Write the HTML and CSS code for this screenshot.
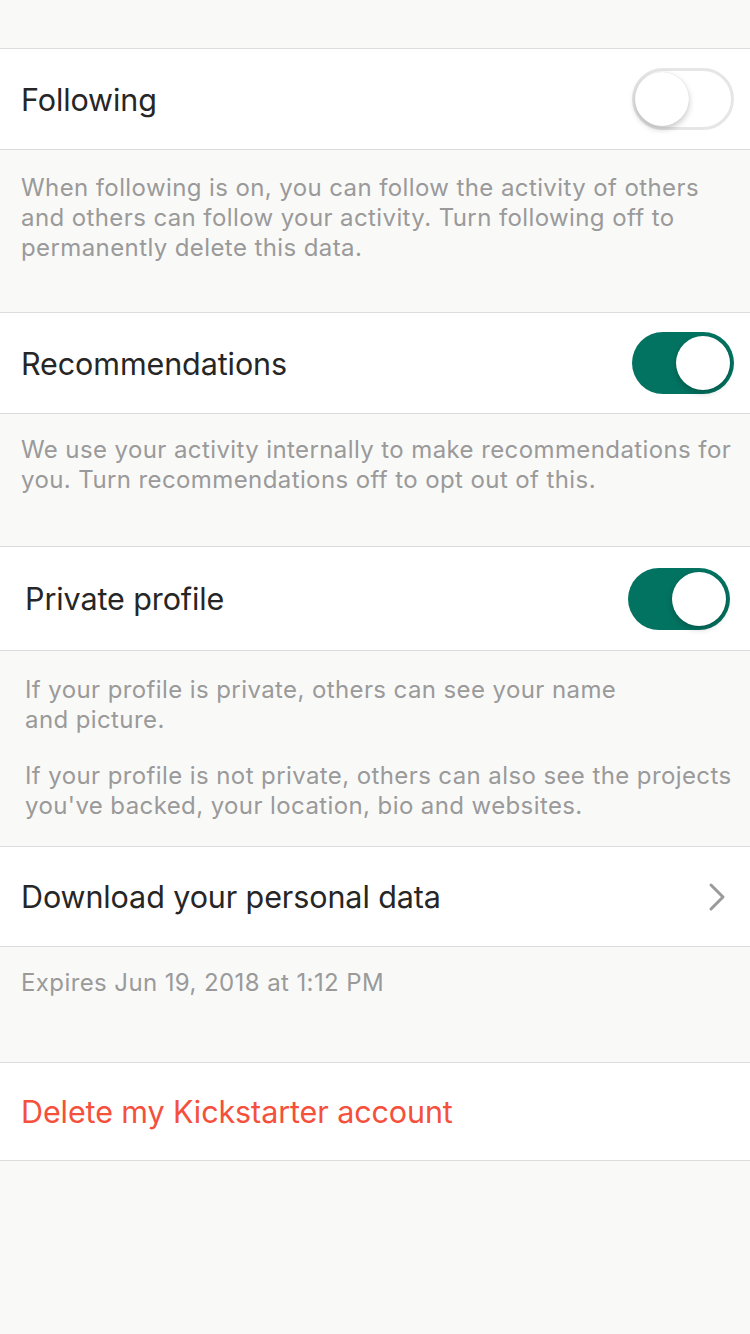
FILE: index.html
```html
<!DOCTYPE html>
<html>
<head>
<meta charset="utf-8">
<link rel="stylesheet" href="styles.css">
</head>
<body>
<div class="page">
  <div class="top-space"></div>

  <div class="row row-following">
    <span class="label">Following</span>
    <span class="switch off"><span class="knob"></span></span>
  </div>
  <div class="note note-1">
    <p>When following is on, you can follow the activity of others and others can follow your activity. Turn following off to permanently delete this data.</p>
  </div>

  <div class="row row-recs">
    <span class="label">Recommendations</span>
    <span class="switch on"><span class="knob"></span></span>
  </div>
  <div class="note note-2">
    <p>We use your activity internally to make recommendations for you. Turn recommendations off to opt out of this.</p>
  </div>

  <div class="row row-private">
    <span class="label">Private profile</span>
    <span class="switch on"><span class="knob"></span></span>
  </div>
  <div class="note note-3">
    <p>If your profile is private, others can see your name<br>and picture.</p>
    <p>If your profile is not private, others can also see the projects you've backed, your location, bio and websites.</p>
  </div>

  <div class="row row-download">
    <span class="label">Download your personal data</span>
    <svg class="chevron" width="20" height="30" viewBox="0 0 20 30"><path d="M3 3 L15 15 L3 27" fill="none" stroke="#9a9a9a" stroke-width="3" stroke-linecap="round" stroke-linejoin="round"/></svg>
  </div>
  <div class="note note-4">
    <p>Expires Jun 19, 2018 at 1:12 PM</p>
  </div>

  <div class="row row-delete">
    <span class="label danger">Delete my Kickstarter account</span>
  </div>
</div>
</body>
</html>
```

FILE: styles.css
```css
html, body {
  margin: 0;
  padding: 0;
  background: #f9f9f8;
}

.page {
  width: 750px;
  min-height: 1334px;
  font-family: Inter, "Liberation Sans", sans-serif;
  -webkit-font-smoothing: antialiased;
}

.top-space {
  height: 48px;
}

.row {
  display: flex;
  align-items: center;
  justify-content: space-between;
  background: #ffffff;
  border-top: 1px solid #dcdcdc;
  border-bottom: 1px solid #dcdcdc;
  padding: 0 16px 0 21px;
  box-sizing: content-box;
}

.row-following { height: 100px; }
.row-recs { height: 100px; }
.row-private { height: 103px; padding-left: 25px; padding-right: 20px; }
.row-download { height: 99px; padding-right: 22px; }
.row-delete { height: 97px; }

.label {
  font-size: 30.5px;
  color: #262626;
  letter-spacing: -0.1px;
}

.label.danger {
  color: #f5503c;
}

.note {
  color: #9a9a9a;
  font-size: 24px;
  letter-spacing: 0.4px;
  line-height: 30px;
  padding: 22px 8px 50px 21px;
}

.note p {
  margin: 0;
}

.note-1 { padding-top: 23px; padding-bottom: 49px; }
.note-2 { padding-top: 21px; padding-bottom: 51px; }
.note-3 { padding-top: 24px; padding-bottom: 25px; padding-left: 25px; }
.note-3 p + p { margin-top: 26px; }
.note-4 { padding-top: 21px; padding-bottom: 64px; }

.switch {
  position: relative;
  width: 102px;
  height: 62px;
  border-radius: 31px;
  box-sizing: border-box;
  flex-shrink: 0;
}

.switch.off {
  background: #ffffff;
  border: 3px solid #e6e6e6;
}

.switch.on {
  background: #037361;
}

.switch .knob {
  position: absolute;
  width: 54px;
  height: 54px;
  border-radius: 50%;
  background: #ffffff;
  box-shadow: 0 3px 6px rgba(0, 0, 0, 0.22), 0 0 1px rgba(0, 0, 0, 0.15);
}

.switch.off .knob {
  left: 0;
  top: 1px;
}

.switch.on .knob {
  right: 4px;
  top: 4px;
}

.chevron {
  display: block;
}
```
